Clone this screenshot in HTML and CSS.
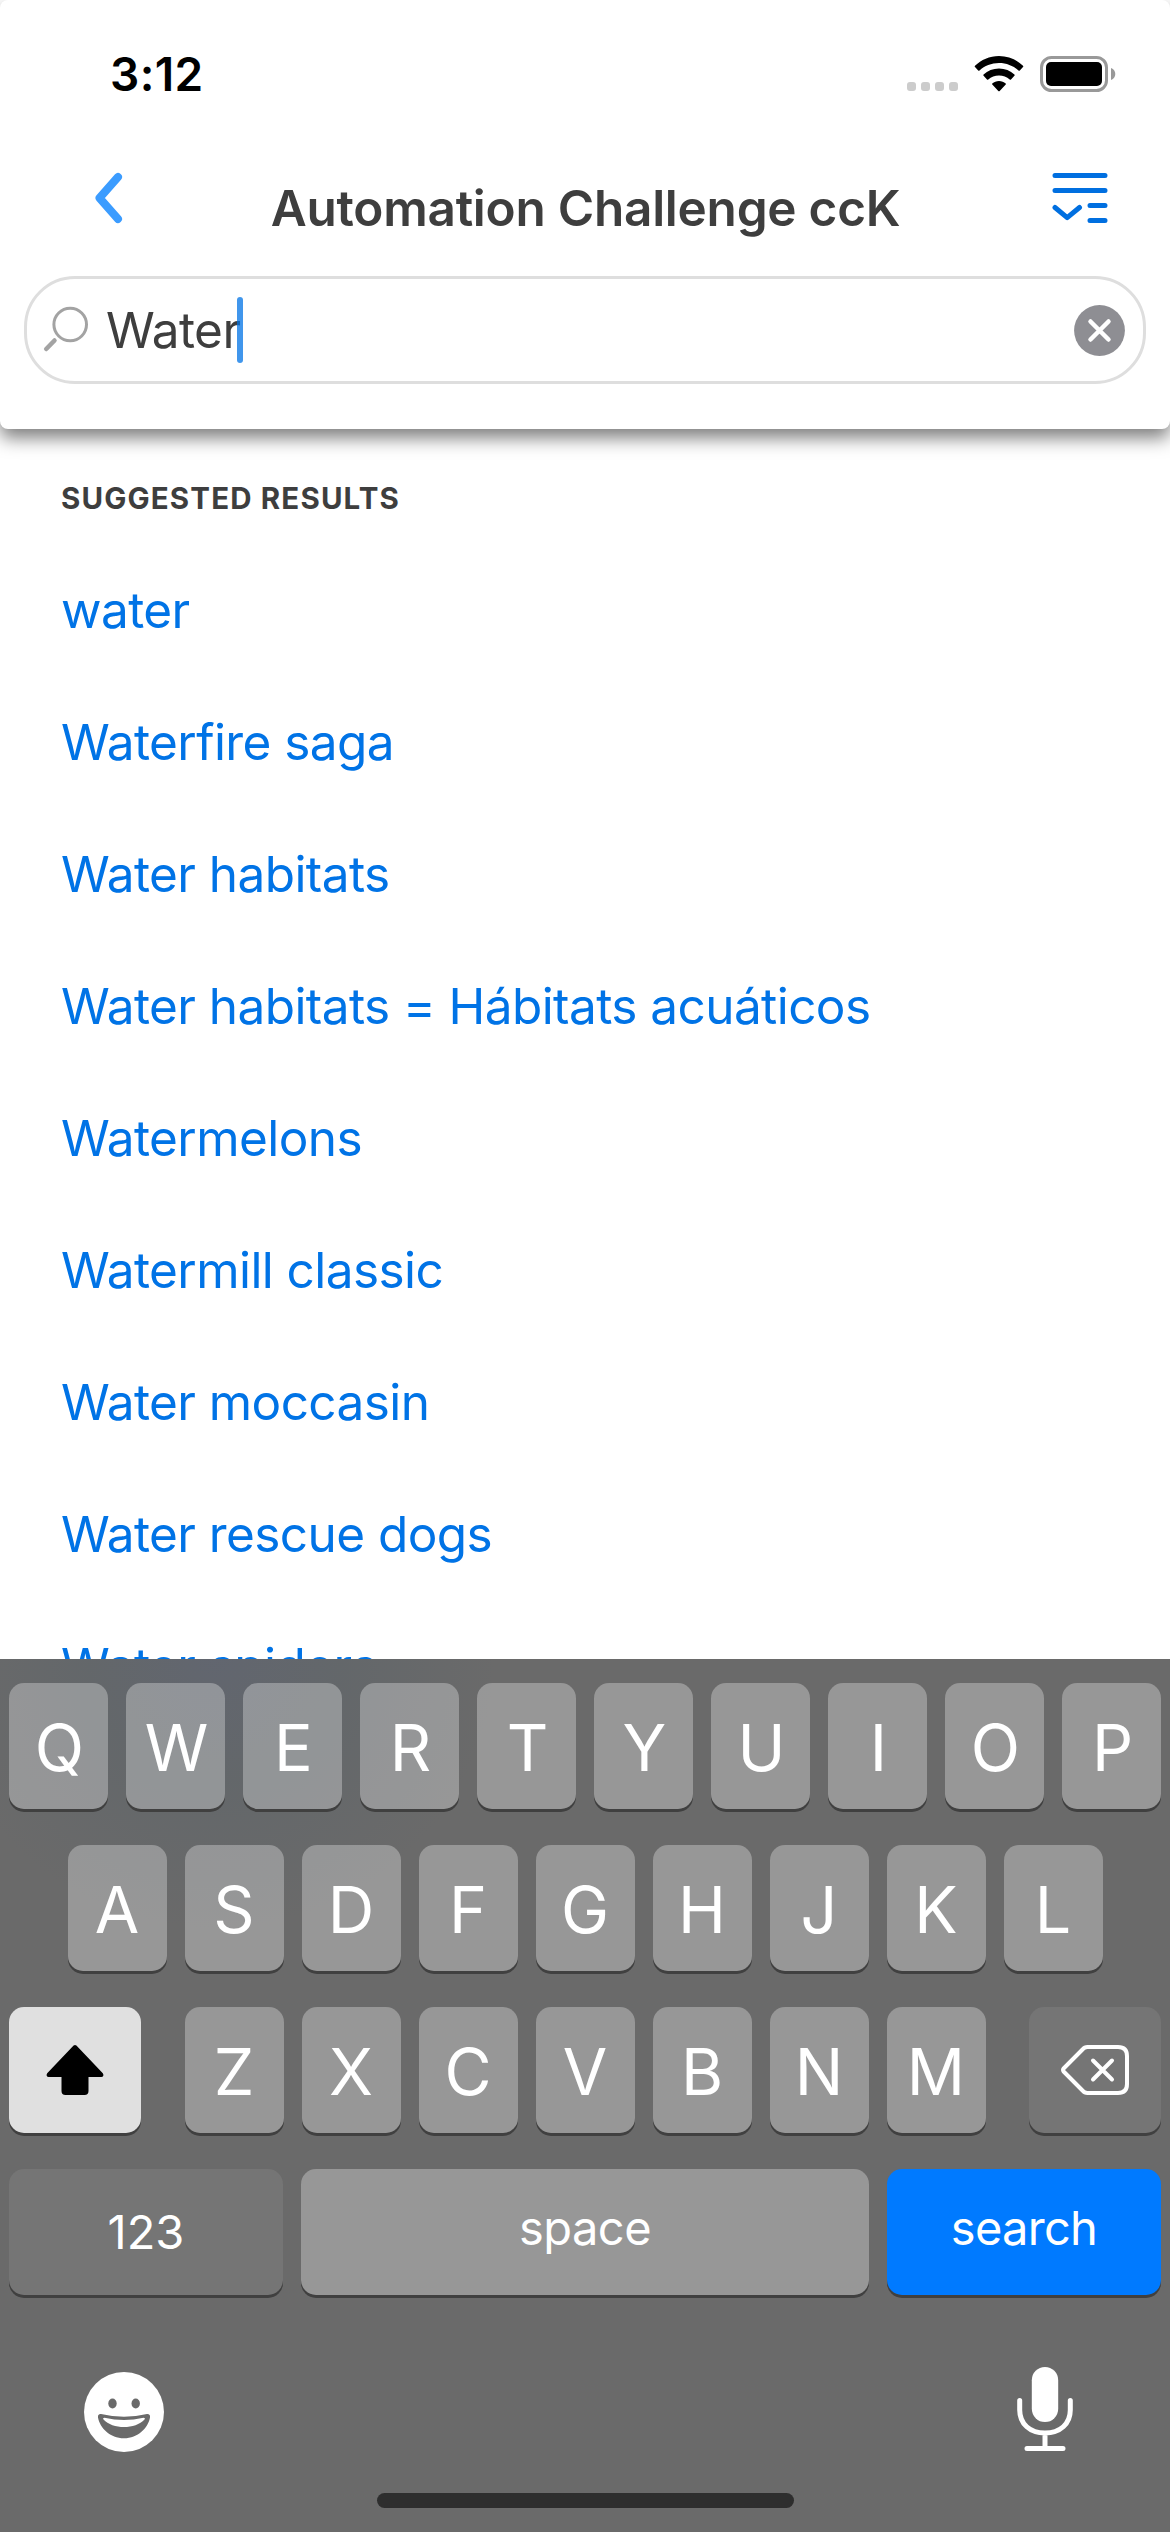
FILE: index.html
```html
<!DOCTYPE html>
<html lang="en">
<head>
<meta charset="utf-8">
<title>Automation Challenge ccK</title>
<link rel="stylesheet" href="styles.css">
</head>
<body>
<header class="header">
  <div class="status">
    <span class="time">3:12</span>
    <span class="status-icons">
      <svg class="cell" width="51" height="9" fill="#ccc"><rect width="9" height="9" rx="3"/><rect x="14" width="9" height="9" rx="3"/><rect x="28" width="9" height="9" rx="3"/><rect x="42" width="9" height="9" rx="3"/></svg>
      <svg class="wifi" width="50" height="38" viewBox="0 0 50 38"><path d="M25 1C15.500 1 7.200 4.800 1 10.800c-.4.4-.4.800 0 1.200l3.200 3.400c.4.4.9.4 1.300 0C10.600 10.900 17.400 8 25 8s14.400 2.900 19.500 7.400c.4.4.9.4 1.300 0l3.200-3.400c.4-.4.4-.8 0-1.200C42.800 4.800 34.500 1 25 1zM25 13.600c-6 0-11.300 2.200-15.400 5.900-.4.4-.4.9 0 1.300l3.400 3.600c.4.4.8.4 1.300 0 2.900-2.500 6.600-4 10.700-4s7.800 1.500 10.700 4c.5.4.9.4 1.300 0l3.400-3.600c.4-.4.4-.9 0-1.300-4.100-3.700-9.400-5.900-15.400-5.900zM25 25.900c-2.600 0-4.900.9-6.700 2.500-.4.400-.4.800 0 1.200l6 6.400c.4.4 1 .4 1.400 0l6-6.400c.4-.4.4-.8 0-1.200-1.800-1.600-4.100-2.500-6.700-2.500z"/></svg>
      <svg class="battery" width="76" height="36" viewBox="0 0 76 36"><rect x="1.500" y="1.500" width="65" height="33" rx="10" fill="none" stroke="#999" stroke-width="3"/><rect x="6" y="6" width="56" height="24" rx="5"/><path d="M71 12c3 1.200 4.300 3.500 4.300 6s-1.300 4.800-4.300 6z" fill="#999"/></svg>
    </span>
  </div>
  <div class="nav">
    <svg class="back" width="30" height="54" viewBox="0 0 30 54"><path d="M24 6 5.500 27 24 48"/></svg>
    <h1 class="title">Automation Challenge ccK</h1>
    <svg class="menu" width="56" height="50" viewBox="0 0 56 50"><path d="M3 2.500h50M3 17.500h50M38 32.500h15M38 47.500h15M3 34.500 15.200 44.700 27.500 34.500"/></svg>
  </div>
  <div class="search">
    <svg class="lens" width="48" height="50" viewBox="0 0 48 50"><circle cx="29.200" cy="19.500" r="16.300" stroke-width="3"/><path d="M13.500 35.500 5.200 44" stroke-width="4.500"/></svg>
    <span class="query"><span>Water</span><i class="caret"></i></span>
    <svg class="clear" width="51" height="51" viewBox="0 0 51 51"><circle cx="25.500" cy="25.500" r="25.400" fill="#8e8e93"/><path d="M16.500 16.500l18 18M34.500 16.500l-18 18"/></svg>
  </div>
</header>
<main class="results">
  <h2 class="heading">SUGGESTED RESULTS</h2>
  <a class="item">water</a>
  <a class="item">Waterfire saga</a>
  <a class="item">Water habitats</a>
  <a class="item">Water habitats = Hábitats acuáticos</a>
  <a class="item">Watermelons</a>
  <a class="item">Watermill classic</a>
  <a class="item">Water moccasin</a>
  <a class="item">Water rescue dogs</a>
  <a class="item">Water spiders</a>
</main>
<section class="keyboard">
  <div class="row row-top"><b class="key">Q</b><b class="key">W</b><b class="key">E</b><b class="key">R</b><b class="key">T</b><b class="key">Y</b><b class="key">U</b><b class="key">I</b><b class="key">O</b><b class="key">P</b></div>
  <div class="row"><b class="key">A</b><b class="key">S</b><b class="key">D</b><b class="key">F</b><b class="key">G</b><b class="key">H</b><b class="key">J</b><b class="key">K</b><b class="key">L</b></div>
  <div class="row row-shift">
    <b class="key shift"><svg width="58" height="50" viewBox="0 0 58 50"><path d="M27.600.6Q29-.6 30.400.6L56.800 28.300Q58.500 31.500 55.500 32H42.500V46Q42.500 50 38.500 50H19.500Q15.500 50 15.500 46V32H2.500Q-.5 31.500 1.200 28.300Z"/></svg></b>
    <div class="row"><b class="key">Z</b><b class="key">X</b><b class="key">C</b><b class="key">V</b><b class="key">B</b><b class="key">N</b><b class="key">M</b></div>
    <b class="key delete"><svg width="68" height="50" viewBox="0 0 68 50" fill="none" stroke="#fff" stroke-width="4" stroke-linecap="round" stroke-linejoin="round"><path d="M26.500 2H57Q66 2 66 11V39Q66 48 57 48H26.500Q23.500 48 21.500 45.500L2.600 26.500Q1.500 25 2.600 23.500L21.500 4.500Q23.500 2 26.500 2Z"/><path d="M32 15.500 51 34.500M51 15.500 32 34.500"/></svg></b>
  </div>
  <div class="row">
    <b class="key mode">123</b>
    <b class="key space">space</b>
    <b class="key go">search</b>
  </div>
  <div class="tools">
    <svg class="emoji" width="80" height="80" viewBox="0 0 80 80"><circle cx="40" cy="40" r="40" fill="#fff"/><g fill="#6a6a6a"><ellipse cx="28.500" cy="31.500" rx="4.200" ry="5"/><ellipse cx="51.700" cy="31.500" rx="4.200" ry="5"/><path d="M17 42Q40 47.500 63 42Q66.500 41.800 66 45.500C64 56 54 66.300 40 66.300S16 56 14 45.500Q13.500 41.800 17 42Z"/></g><path d="M20.500 45.800Q40 50.200 59.500 45.800Q61.700 45.800 60.500 47.500C56 52.500 48 55 40 55S24 52.500 19.500 47.500Q18.300 45.800 20.500 45.800Z" fill="#fff"/></svg>
    <svg class="mic" width="56" height="84" viewBox="0 0 56 84"><rect x="14.800" width="26.400" height="55" rx="13.200" fill="#fff"/><path d="M2.700 33.500V43C2.700 57 13 66 28 66S53.300 57 53.300 43V33.500M28 66V81M10 81.500H46" fill="none" stroke="#fff" stroke-width="5" stroke-linecap="round"/></svg>
  </div>
  <div class="home"></div>
</section>
</body>
</html>
```
FILE: styles.css
```css
* { box-sizing: border-box; }

body {
  margin: 0;
  width: 1170px;
  height: 2532px;
  display: flex;
  flex-direction: column;
  overflow: hidden;
  background: #fff;
  font-family: Inter, "Liberation Sans", sans-serif;
  color: #3e3e3e;
}

svg { display: block; flex: none; }

/* Header */
.header {
  position: relative;
  z-index: 1;
  flex: none;
  height: 429px;
  background: #fff;
  border-radius: 8px;
  box-shadow: 0 9px 18px rgba(0, 0, 0, .51);
}
.status {
  height: 148px;
  padding: 0 54px 0 110px;
  display: flex;
  align-items: center;
  justify-content: space-between;
}
.time { color: #000; font-size: 46px; font-weight: 600; line-height: 50px; letter-spacing: .4px; }
.status-icons { display: flex; align-items: center; }
.cell { margin: 25px 16px 0 0; }
.wifi { margin-right: 16px; }
.nav {
  height: 100px;
  padding: 0 62px 0 94px;
  display: flex;
  align-items: center;
  justify-content: space-between;
}
.back path { fill: none; stroke: #3b9cff; stroke-width: 8; stroke-linecap: round; stroke-linejoin: round; }
.title {
  margin: 20px 0 0 -5px;
  font-size: 49.5px;
  font-weight: 600;
  line-height: 60px;
  letter-spacing: -.25px;
  white-space: nowrap;
}
.menu path { fill: none; stroke: #006fe0; stroke-width: 5; stroke-linecap: round; stroke-linejoin: round; }
.search {
  height: 108px;
  margin: 28px 24px 0;
  padding: 0 18px 0 14px;
  display: flex;
  align-items: center;
  border: 3px solid #dedede;
  border-radius: 51px;
}
.lens { fill: none; stroke: #a3a3a3; stroke-linecap: round; }
.query {
  flex: 1;
  display: flex;
  align-items: center;
  margin-left: 17px;
  font-size: 49.5px;
  line-height: 66px;
  letter-spacing: -.55px;
}
.caret { width: 6px; height: 66px; margin-left: -4px; border-radius: 3px; background: rgba(0, 115, 230, .75); }
.clear path { stroke: #fff; stroke-width: 4.5; stroke-linecap: round; }

/* Suggestions */
.results {
  flex: none;
  height: 1230px;
  padding: 49px 61px 0;
  overflow: hidden;
}
.heading {
  margin: 0 0 26px;
  font-size: 29.5px;
  font-weight: 700;
  line-height: 40px;
  letter-spacing: 1.15px;
}
.item {
  display: block;
  height: 132px;
  font-size: 49.5px;
  line-height: 132px;
  letter-spacing: -.57px;
  color: #0073e6;
  white-space: nowrap;
}

/* Keyboard */
.keyboard {
  flex: 1;
  padding: 24px 9px 0;
  display: flex;
  flex-direction: column;
  gap: 36px;
  background: radial-gradient(ellipse 280px 270px at 215px 0, rgba(86, 96, 118, .42), rgba(90, 99, 106, .42) 45%, rgba(106, 106, 106, 0)) #6a6a6a;
  color: #fff;
}
.row { display: flex; justify-content: center; gap: 18px; }
.row-shift { justify-content: space-between; }
.key {
  width: 99px;
  height: 126px;
  padding-top: 3px;
  display: flex;
  align-items: center;
  justify-content: center;
  border-radius: 15px;
  background: rgba(255, 255, 255, .3);
  box-shadow: 0 3px 0 #404040;
  font-size: 64.5px;
  font-weight: 400;
  line-height: 80px;
}
.row-top .key { padding-left: 2px; }
.shift, .delete { width: 132px; padding: 0; }
.shift { background: #e0e0e0; }
.delete, .mode { background: #757575; }
.mode, .space, .go { font-size: 47px; padding: 0; }
.mode { width: 274px; }
.space { flex: 1; padding-bottom: 8px; letter-spacing: -.5px; }
.go { width: 274px; padding-bottom: 8px; letter-spacing: -.7px; background: #007aff; }
.tools {
  height: 84px;
  margin: 36px 88px 0 75px;
  display: flex;
  align-items: center;
  justify-content: space-between;
}
.emoji { margin-top: 6px; }
.home {
  align-self: center;
  width: 417px;
  height: 15px;
  margin-top: 6px;
  border-radius: 8px;
  background: #2e2e2e;
}
```
